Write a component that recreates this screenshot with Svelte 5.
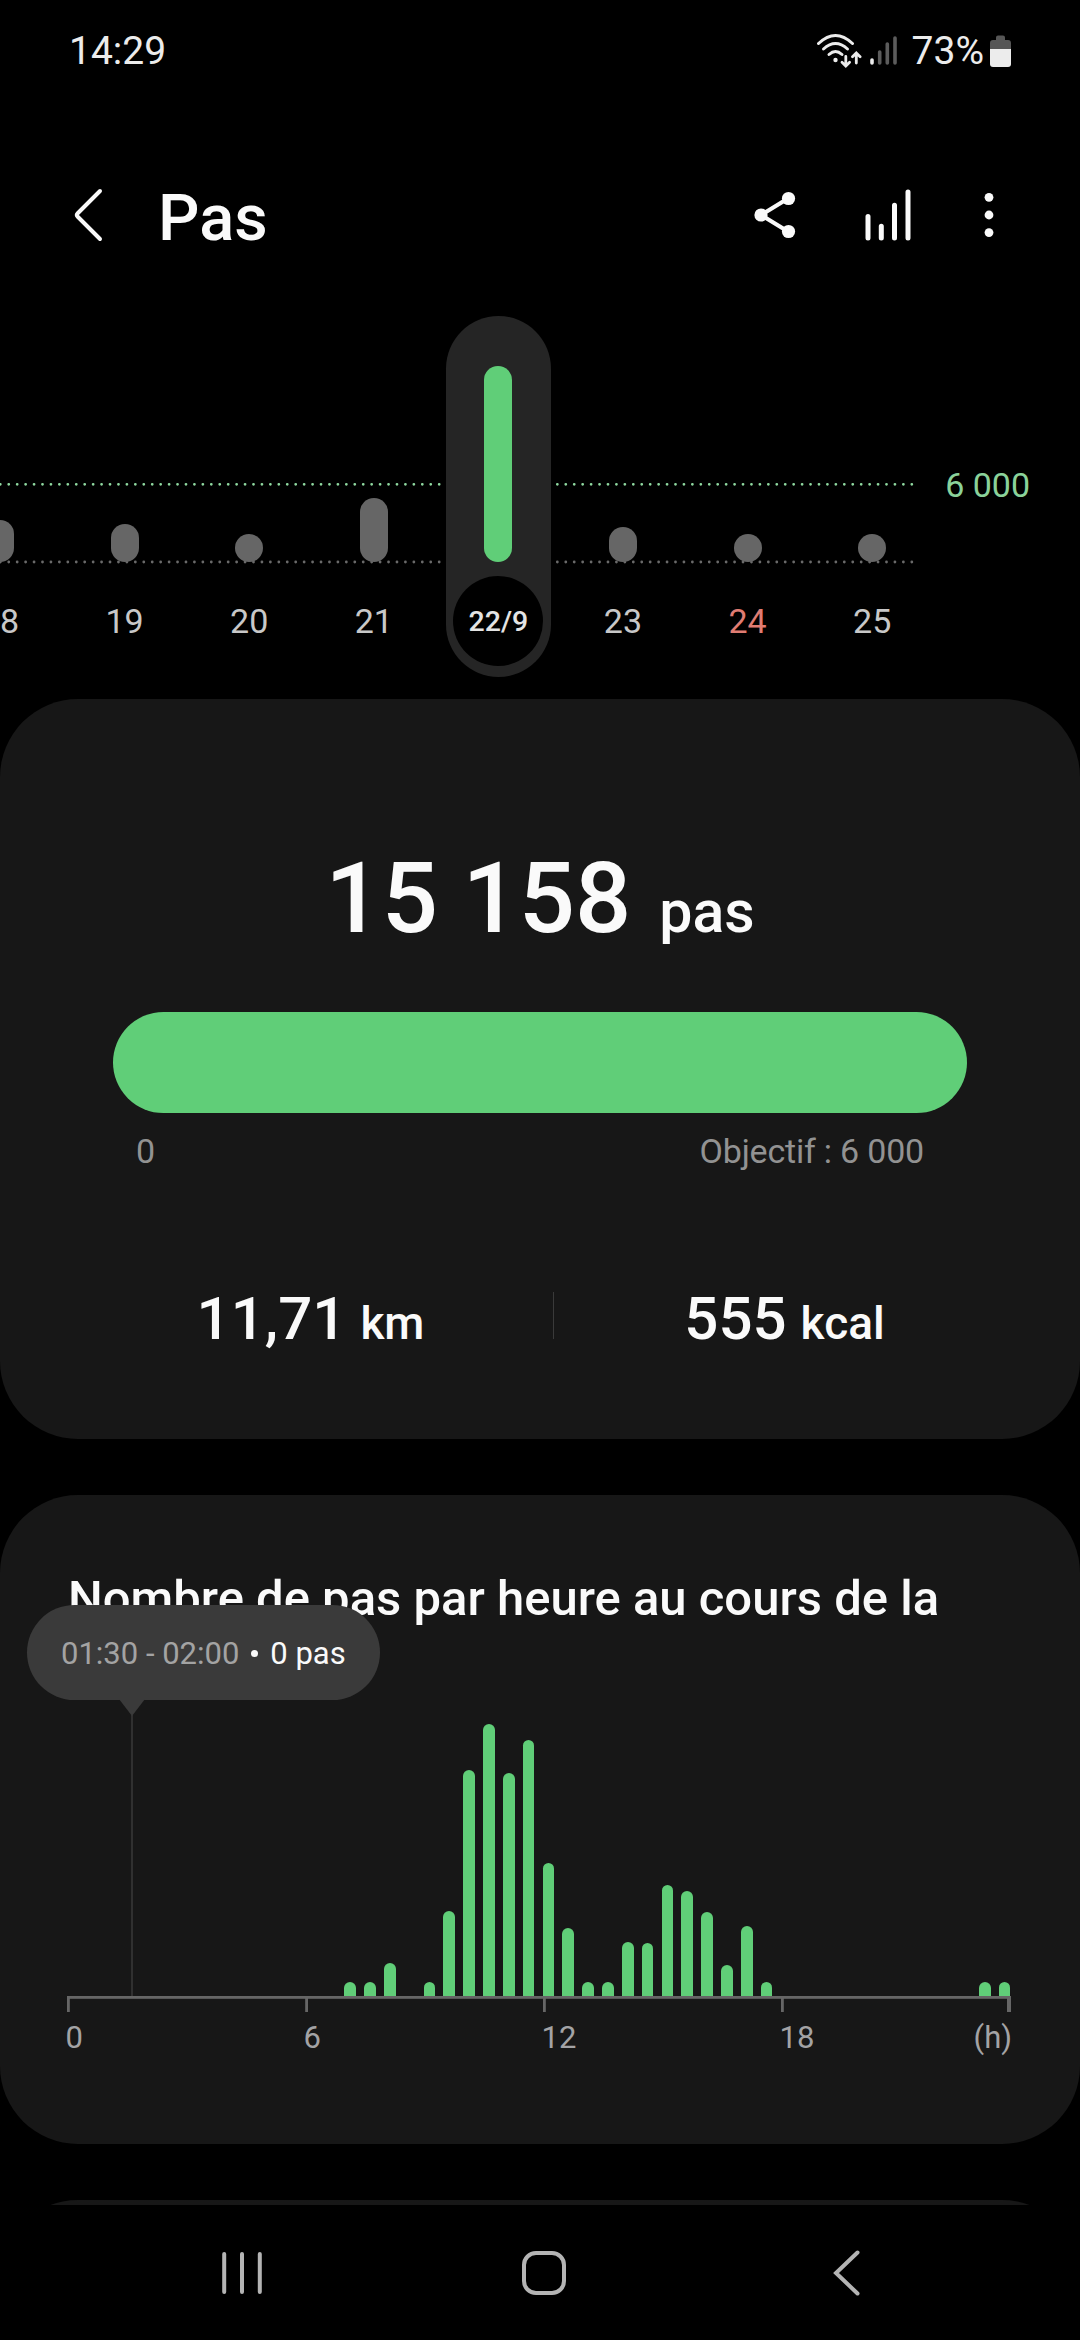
<script lang="ts">
	type Day = { label: string; height: number; selected?: boolean; sunday?: boolean };

	const days: Day[] = [
		{ label: '18', height: 42 },
		{ label: '19', height: 38 },
		{ label: '20', height: 28 },
		{ label: '21', height: 64 },
		{ label: '22/9', height: 196, selected: true },
		{ label: '23', height: 35 },
		{ label: '24', height: 28, sunday: true },
		{ label: '25', height: 28 }
	];

	// one bar per half hour, from 00:00 to 24:00
	const halfHours = [
		0, 0, 0, 0, 0, 0, 0, 0, 0, 0, 0, 0,
		0, 0, 14, 14, 33, 0, 14, 85, 226, 272, 223, 256,
		133, 68, 14, 14, 54, 53, 111, 105, 84, 31, 70, 14,
		0, 0, 0, 0, 0, 0, 0, 0, 0, 0, 14, 14
	];

	const hourLabels = ['0', '6', '12', '18'];
</script>

<div class="screen">
	<div class="status-bar">
		<span class="clock">14:29</span>
		<svg class="wifi" width="46" height="36" viewBox="0 0 46 36" fill="none" stroke="#ececec" stroke-width="3" stroke-linecap="round">
			<path d="M2.5 10.5Q19.5 -5.5 36.5 10.5" />
			<path d="M7.5 16Q19.5 5 31.5 16" />
			<path d="M13 21.5Q19.5 15.5 26 21.5" />
			<circle cx="19.5" cy="27" r="2.2" fill="#ececec" stroke="none" />
			<path d="M29.8 23.5V32.5M26 29.3L29.8 33L33.6 29.3" stroke-width="2.8" />
			<path d="M40.3 30V20.5M36.5 23.8L40.3 20L44.1 23.8" stroke-width="2.8" />
		</svg>
		<svg class="signal" width="28" height="31" viewBox="0 0 28 31" stroke-width="3.6" stroke-linecap="round">
			<path d="M2 25V28" stroke="#ececec" />
			<path d="M9.7 17V28M17.3 9V28M25 3V28" stroke="#5c5c5c" />
		</svg>
		<span class="percent">73%</span>
		<svg class="battery" width="21" height="32" viewBox="0 0 21 32">
			<path d="M6 2.5Q6 .5 8 .5H13Q15 .5 15 2.5V5H18Q21 5 21 8V14H0V8Q0 5 3 5H6Z" fill="#565656" />
			<path d="M0 14H21V29Q21 32 18 32H3Q0 32 0 29Z" fill="#ececec" />
		</svg>
	</div>

	<header class="app-bar">
		<svg class="back" width="32" height="60" viewBox="0 0 32 60" fill="none" stroke="#fafafa" stroke-width="4" stroke-linecap="round" stroke-linejoin="round">
			<path d="M28 3L5.5 25.5Q4 27 5.5 28.5L28 51" />
		</svg>
		<h1>Pas</h1>
		<svg class="share" width="44" height="60" viewBox="0 0 44 60" fill="#fafafa" stroke="#fafafa">
			<path d="M35 10.5L8 27L35 43.5" fill="none" stroke-width="4.2" />
			<circle cx="8" cy="27" r="6.6" stroke="none" />
			<circle cx="35.5" cy="10.5" r="6.6" stroke="none" />
			<circle cx="35.5" cy="43.5" r="6.6" stroke="none" />
		</svg>
		<svg class="trends" width="50" height="60" viewBox="0 0 50 60" stroke="#fafafa" stroke-width="5" stroke-linecap="round">
			<path d="M5 28.5V50M18.3 38.3V50M31.5 17.3V50M45 4V50" />
		</svg>
		<svg class="more" width="10" height="60" viewBox="0 0 10 60" fill="#fafafa">
			<circle cx="5" cy="9.3" r="4.4" />
			<circle cx="5" cy="27" r="4.4" />
			<circle cx="5" cy="44.6" r="4.4" />
		</svg>
	</header>

	<section class="week">
		<svg class="guides" width="914" height="361" viewBox="0 0 914 361" stroke-width="2.8" stroke-linecap="round" stroke-dasharray="0 8.44">
			<path d="M0.3 168.3H914" stroke="#8fd9a0" />
			<path d="M0.3 246H914" stroke="#6a6a6a" />
		</svg>
		<div class="days">
			{#each days as day}
				<div class="day" class:selected={day.selected} class:sunday={day.sunday}>
					<div class="day-bar-area">
						<div class="day-bar" style="height: {day.height}px"></div>
					</div>
					<span class="day-label">{day.label}</span>
				</div>
			{/each}
		</div>
		<span class="goal">6 000</span>
	</section>

	<section class="card summary">
		<div class="total"><strong>15 158</strong><span>pas</span></div>
		<div class="progress"></div>
		<div class="range"><span>0</span><span class="target">Objectif : 6 000</span></div>
		<div class="stats">
			<div class="stat"><strong>11,71</strong><span>km</span></div>
			<div class="divider"></div>
			<div class="stat"><strong>555</strong><span>kcal</span></div>
		</div>
	</section>

	<section class="card hourly">
		<h2>Nombre de pas par heure au cours de la</h2>
		<div class="plot">
			<div class="cursor"></div>
			<div class="tooltip">
				<span class="time">01:30 - 02:00</span>
				<i class="dot"></i>
				<span>0 pas</span>
			</div>
			{#each halfHours as height}
				<div class="slot">
					{#if height > 0}
						<div class="bar" style="height: {height}px"></div>
					{/if}
				</div>
			{/each}
		</div>
		<svg class="axis" width="944" height="16" viewBox="0 0 944 16" fill="#666">
			<rect width="944" height="2.8" />
			<rect width="2.8" height="16" />
			<rect x="238.2" width="2.8" height="16" />
			<rect x="476" width="2.8" height="16" />
			<rect x="714" width="2.8" height="16" />
			<rect x="940" width="4" height="16" />
		</svg>
		<div class="hours">
			{#each hourLabels as hour}
				<span>{hour}</span>
			{/each}
			<span class="unit">(h)</span>
		</div>
	</section>

	<div class="next">
		<section class="card"></section>
	</div>

	<nav>
		<svg width="42" height="48" viewBox="0 0 42 48" stroke="#b4b4b4" stroke-width="4" stroke-linecap="round">
			<path d="M3.2 5V43M21 5V43M38.8 5V43" />
		</svg>
		<svg class="home" width="48" height="48" viewBox="0 0 48 48" fill="none" stroke="#b4b4b4" stroke-width="4">
			<rect x="4" y="4" width="40" height="40" rx="12" />
		</svg>
		<svg width="30" height="48" viewBox="0 0 30 48" fill="none" stroke="#b4b4b4" stroke-width="4" stroke-linecap="round">
			<path d="M26.5 3.5L5 24L26.5 44.5" />
		</svg>
	</nav>
</div>

<style>
	:global(body) {
		margin: 0;
		background: #000;
	}
	.screen {
		display: flex;
		flex-direction: column;
		width: 1080px;
		height: 2340px;
		overflow: hidden;
		background: #000;
		color: #fafafa;
		font-family: Roboto, sans-serif;
	}
	svg {
		display: block;
		flex: none;
	}

	.status-bar {
		display: flex;
		align-items: center;
		height: 101px;
		padding: 0 69px 0 69px;
		font-size: 39px;
		color: #ececec;
	}
	.clock { flex: 1; }
	.wifi { margin-right: 8px; }
	.percent { margin: 0 6px 0 14px; }

	.app-bar {
		display: flex;
		align-items: center;
		height: 100px;
		margin: 67px 0 48px;
		padding: 0 86px 0 72px;
	}
	h1 {
		flex: 1;
		margin: 0 0 0 54px;
		font-size: 65px;
		font-weight: 500;
		line-height: 100px;
	}
	.share { margin-right: 66px; }
	.trends { margin-right: 71px; }

	.week {
		position: relative;
		display: flex;
		height: 361px;
		margin-bottom: 22px;
	}
	.guides { position: absolute; left: 0; top: 0; }
	.days {
		position: relative;
		display: flex;
		width: 997px;
		margin-left: -62.3px;
	}
	.day {
		display: flex;
		flex-direction: column;
		align-items: center;
		width: 124.6px;
		color: #c8c8c8;
		font-size: 34px;
	}
	.day-bar-area {
		display: flex;
		align-items: flex-end;
		height: 246px;
	}
	.day-bar {
		width: 28px;
		border-radius: 14px;
		background: #666;
	}
	.day-label {
		width: 90px;
		height: 90px;
		margin-top: 14px;
		border-radius: 50%;
		line-height: 90px;
		text-align: center;
	}
	.day.sunday { color: #e07c72; }
	.day.selected {
		width: 105px;
		margin: 0 9.8px;
		border-radius: 53px;
		background: #252525;
		color: #e4e4e4;
	}
	.selected .day-bar { background: #60ce78; }
	.selected .day-label {
		background: #000;
		font-size: 28.5px;
		font-weight: 500;
		line-height: 91px;
	}
	.goal {
		margin: 149px 0 0 10.5px;
		color: #8ad29a;
		font-size: 34px;
		line-height: 40px;
		white-space: nowrap;
	}

	.card {
		flex: none;
		box-sizing: border-box;
		border-radius: 78px;
		background: #171717;
	}
	.summary {
		height: 740px;
		margin-bottom: 56px;
		padding-top: 149px;
	}
	strong { font-weight: 500; }
	.total {
		display: flex;
		justify-content: center;
		align-items: baseline;
		gap: 28px;
		height: 100px;
		font-weight: 500;
		line-height: 100px;
	}
	.total strong { font-size: 99px; }
	.total span { font-size: 59px; line-height: 60px; }
	.progress {
		height: 101px;
		margin: 64px 113px 0;
		border-radius: 51px;
		background: #60ce78;
	}
	.range {
		display: flex;
		justify-content: space-between;
		margin: 18px 156px 0 136px;
		color: #929292;
		font-size: 34px;
		line-height: 40px;
	}
	.target { letter-spacing: -0.2px; }
	.stats {
		display: grid;
		grid-template-columns: 485px 1px 461px;
		margin: 118px 0 0 68px;
	}
	.stat {
		display: flex;
		justify-content: center;
		align-items: baseline;
		gap: 14px;
		font-size: 46px;
		font-weight: 500;
		line-height: 60px;
	}
	.stat strong { font-size: 60px; }
	.divider {
		height: 47px;
		margin-top: 3px;
		background: #3a3a3a;
	}

	.hourly {
		height: 649px;
		margin-bottom: 56px;
		padding-top: 76px;
	}
	h2 {
		margin: 0 0 0 68px;
		font-size: 49px;
		font-weight: 500;
		line-height: 56px;
		white-space: nowrap;
	}
	.plot {
		position: relative;
		display: flex;
		height: 369px;
		padding-left: 62.7px;
	}
	.slot {
		display: flex;
		justify-content: center;
		align-items: flex-end;
		width: 19.83px;
	}
	.bar {
		width: 11.7px;
		border-radius: 6px 6px 0 0;
		background: #60ce78;
	}
	.cursor {
		position: absolute;
		left: 131px;
		top: 88px;
		bottom: 0;
		width: 2px;
		background: #303030;
	}
	/* floats over the title, pointing at the selected half hour */
	.tooltip {
		position: absolute;
		left: 27px;
		top: -22px;
		display: flex;
		align-items: center;
		box-sizing: border-box;
		width: 353px;
		height: 95px;
		padding: 2px 0 0 34px;
		border-radius: 48px;
		background: #3a3a3a;
		font-size: 31px;
		white-space: nowrap;
	}
	.tooltip::after {
		content: '';
		position: absolute;
		left: 92px;
		top: 94px;
		border: 13px solid transparent;
		border-top: 17px solid #3a3a3a;
		border-bottom: 0;
	}
	.time { color: #a3a3a3; }
	.dot {
		width: 7px;
		height: 7px;
		margin: 0 12px;
		border-radius: 50%;
		background: #fafafa;
	}
	.axis { margin-left: 67px; }
	.hours {
		display: flex;
		margin: 8px 68px 0 65.5px;
		color: #a3a3a5;
		font-size: 31px;
		line-height: 36px;
	}
	.hours span { flex: none; width: 238px; }
	.hours .unit {
		width: auto;
		margin-left: auto;
	}
	.hours span:nth-child(4) { width: 170px; }

	/* only the top edge of the following card shows above the navigation bar */
	.next {
		height: 5px;
		overflow: hidden;
	}
	.next .card { height: 300px; }

	nav {
		display: flex;
		align-items: center;
		justify-content: space-between;
		height: 135px;
		padding: 0 219px 0 221px;
	}
	.home { margin-right: 7px; }
</style>
